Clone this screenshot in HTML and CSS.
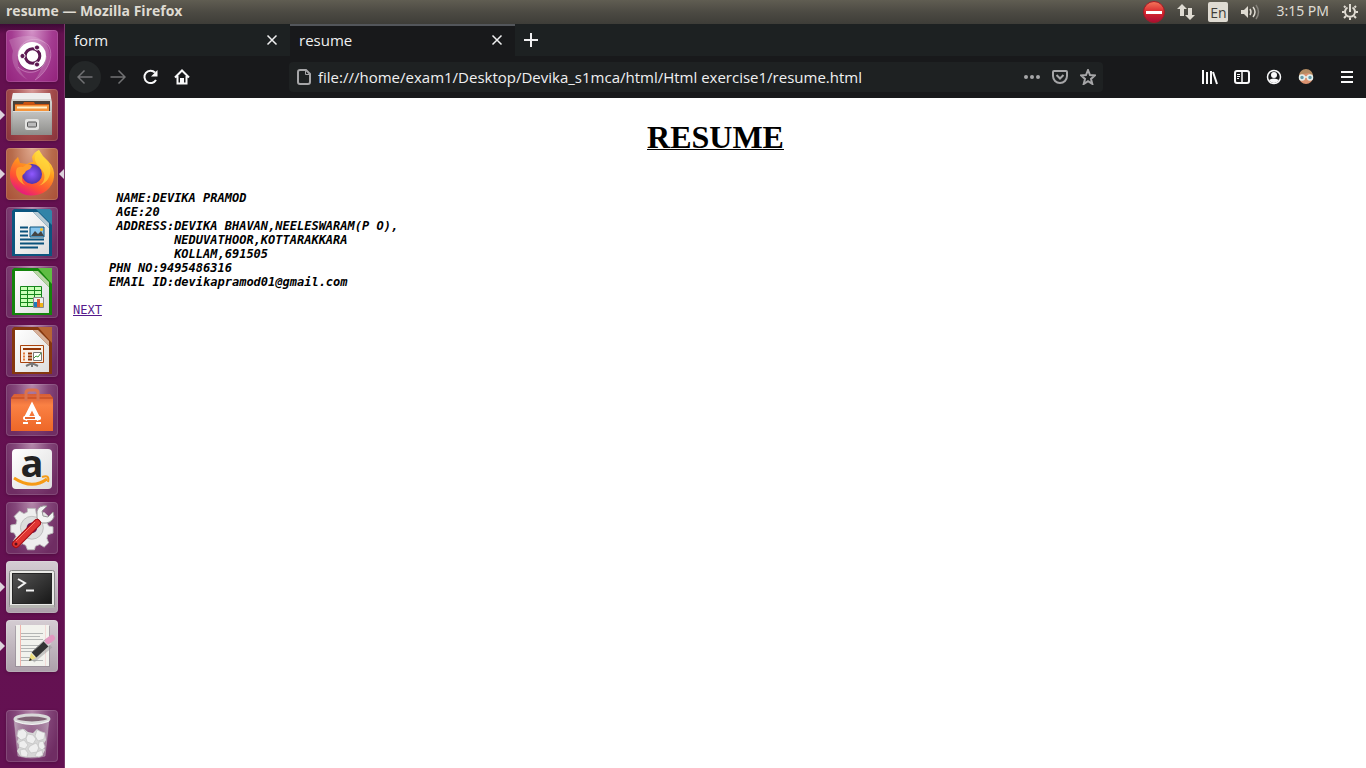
FILE: index.html
```html
<!DOCTYPE html>
<html lang="en">
<head>
<meta charset="utf-8">
<title>resume</title>
<link rel="stylesheet" href="styles.css">
</head>
<body>
<header class="panel">
  <span class="panel-title">resume — Mozilla Firefox</span>
  <div class="indicators">
    <svg width="22" height="22" viewBox="0 0 22 22"><defs><linearGradient id="stop" x2="0" y2="1"><stop offset="0" stop-color="#f4785c"/><stop offset=".5" stop-color="#d8282e"/><stop offset="1" stop-color="#a80c35"/></linearGradient></defs><circle cx="11" cy="11" r="10.5" fill="url(#stop)" stroke="#a31a26"/><path d="M3 10h16v3H3z" fill="#fff"/></svg>
    <svg width="18" height="18" viewBox="0 0 18 18" fill="#dfdbd2"><path d="M5 1l5 5H7v7H3V6H0zM13 17l-5-5h3V5h4v7h3z"/></svg>
    <span class="lang">En</span>
    <svg width="20" height="16" viewBox="0 0 20 16" fill="none" stroke="#dfdbd2" stroke-width="1.5"><path d="M1 6h3l4-4v12l-4-4H1z" fill="#dfdbd2" stroke="none"/><path d="M10 5q2 3 0 6M13 3q4 5 0 10"/><path d="M16 1q5 7 0 14" stroke="#85827b"/></svg>
    <span class="clock">3:15 PM</span>
    <svg width="18" height="18" viewBox="0 0 18 18" fill="none" stroke="#dfdbd2" stroke-width="2"><path d="M6.500 4.500a5 5 0 1 0 5 0M9 1v8"/><path d="M4.500 4.500L3 3M13.500 4.500L15 3M3.500 9H1M14.500 9H17M5 13l-2 2M13 13l2 2M9 14.500V17"/></svg>
  </div>
</header>
<div class="desktop">
  <nav class="launcher" aria-label="Launcher">
    <button class="tile dash" aria-label="Dash"><svg viewBox="0 0 52 52"><g fill="none" stroke="#e4b6dc" stroke-opacity=".45"><path d="M12 26C12 10 30 4 42 15C49 25 42 42 29 50M40 26c0 15-17 22-28 11"/></g><path d="M3 10C18 4 38 3 43 20c4 12-5 24-14 30 9-13 9-21 8-27C32 12 15 13 12 26c-2 11 4 19 10 24C9 43 4 31 7 21z" fill="#fff" opacity=".17"/><circle cx="26" cy="27" r="14" fill="#40103b" opacity=".35"/><circle cx="26" cy="26" r="14" fill="#fff"/><circle cx="26.500" cy="26" r="7.300" fill="none" stroke="#5d1952" stroke-width="3"/><g fill="#5d1952" stroke="#fff"><circle cx="16.500" cy="26" r="2.600"/><circle cx="31" cy="17.500" r="2.600"/><circle cx="31" cy="34.500" r="2.600"/></g></svg></button>
    <button class="tile files running" aria-label="Files"><svg viewBox="0 0 52 52"><defs><linearGradient id="metal" x2="0" y2="1"><stop stop-color="#e2e2e0"/><stop offset="1" stop-color="#8c8c88"/></linearGradient><linearGradient id="drawer" x2="0" y2="1"><stop stop-color="#c4c4c2"/><stop offset="1" stop-color="#8e8e8b"/></linearGradient></defs><path d="M7 4h37l2 9v33H5V13z" fill="url(#metal)"/><path d="M7 4h37l1 6H6z" fill="#eee"/><path d="M7 12h37v10H7z" fill="#4b4038"/><path d="M9 15h8l1-2h10l1 2h14v7H9z" fill="#c95412"/><path d="M9 16h34v6H9z" fill="#f5943a"/><path d="M11 18.500h30" stroke="#fff3cd" stroke-width="2"/><path d="M7 22h38v24H7z" fill="url(#drawer)"/><path d="M7 22.500h38" stroke="#dededc"/><rect x="19" y="30" width="14" height="11" rx="2" fill="#e4e4e2"/><rect x="21.500" y="33" width="9" height="5" rx="1" fill="#bbb" stroke="#555"/></svg></button>
    <button class="tile firefox running active" aria-label="Firefox"><svg viewBox="0 0 52 52"><defs><linearGradient id="fox" x1=".8" y1="0" x2=".3" y2="1"><stop stop-color="#fff44f"/><stop offset=".4" stop-color="#ff9a1d"/><stop offset=".75" stop-color="#ff4e35"/><stop offset="1" stop-color="#e31587"/></linearGradient><radialGradient id="globe"><stop stop-color="#9059ff"/><stop offset="1" stop-color="#5034af"/></radialGradient></defs><path d="M33 2q3 6 9 11q7 7 6 16A22 20 0 0 1 4 26q0-7 5-14l3-3 2 6 7 1q3-2 6-2l-1-5q2-5 7-7z" fill="url(#fox)"/><path d="M33 2c-8 9-3 13 3 20 5 6 2 14-4 16 12-3 16-16 9-25-5-4-7-6-8-11z" fill="#ffd83c" opacity=".7"/><circle cx="26" cy="26" r="10" fill="url(#globe)"/><path d="M11 20q3-2 6-1l4-3q4 0 5 2l-2 3-4 2c-2 4-4 3-4 7q0 6 5 8-8-3-10-9-2-5 0-9z" fill="#ff9d2c"/></svg></button>
    <button class="tile" aria-label="LibreOffice Writer"><svg viewBox="0 0 52 52"><defs><linearGradient id="paper" x2="1" y2="1"><stop stop-color="#fff"/><stop offset="1" stop-color="#dedede"/></linearGradient></defs><path d="M8 2h25l13 13v34H6V4z" fill="#0c557f"/><path d="M30 2h14l2 2v14z" fill="#3184a8"/><path d="M9 5h18l16 16v26H9z" fill="url(#paper)"/><path d="M27 5l16 16V16L32 5z" fill="#b5c9d3"/><path d="M14 20.500h8m-8 4h8m-8 4h8m-8 4h24m-24 4h24m-24 4h18" stroke="#0b527c" stroke-width="2"/><path d="M24 20h14v10H24z" fill="#87c5ed" stroke="#0b527c"/><path d="M25 29l4-5 3 3 3-3 3 5z" fill="#444"/><circle cx="35.500" cy="22.500" r="1.500" fill="#f9bd24"/></svg></button>
    <button class="tile" aria-label="LibreOffice Calc"><svg viewBox="0 0 52 52"><path d="M8 2h25l13 13v34H6V4z" fill="#14830c"/><path d="M32 2h14v16z" fill="#60bd43"/><path d="M9 5h18l16 16v26H9z" fill="url(#paper)"/><path d="M27 5l16 16V16L32 5z" fill="#b9d5a5"/><path d="M15 20.500h20v20H15z" fill="#caffb8"/><path d="M14.500 20.500h21v20h-21zM14.500 24.500h21m-21 4h21m-21 4h21m-21 4h21M21.500 20v20m7-20v20" fill="none" stroke="#16861c"/><path d="M27.500 31.500h10v10h-10z" fill="#eee" stroke="#888"/><path d="M28 36h3v5h-3z" fill="#1c79bd"/><path d="M31 33h3v8h-3z" fill="#dc5a2f"/><path d="M34 37h3v4h-3z" fill="#efb417"/></svg></button>
    <button class="tile" aria-label="LibreOffice Impress"><svg viewBox="0 0 52 52"><path d="M8 2h25l13 13v34H6V4z" fill="#85370f"/><path d="M32 2h14v16z" fill="#b76535"/><path d="M9 5h18l16 16v26H9z" fill="url(#paper)"/><path d="M27 5l16 16V16L32 5z" fill="#d7b19a"/><path d="M14.500 20.500h23v17h-23z" fill="#f9f1e8" stroke="#a9430d"/><path d="M17 24h18M22 28.500h4m-4 3h4m-4 3h4" stroke="#943606" stroke-width="2"/><path d="M17 28.500h2m-2 3h2m-2 3h2" stroke="#e27b3b" stroke-width="2"/><path d="M27.500 27.500h8v8h-8z" fill="#fff" stroke="#777"/><path d="M28 33l2-2 2 1 3-4" fill="none" stroke="#3b9836"/><path d="M20 41l6-3 6 3M26 38v4" fill="none" stroke="#777" stroke-width="2"/></svg></button>
    <button class="tile" aria-label="Ubuntu Software"><svg viewBox="0 0 52 52"><defs><linearGradient id="bag" x2="0" y2="1"><stop stop-color="#d65d35"/><stop offset=".3" stop-color="#fa8144"/><stop offset="1" stop-color="#ed6728"/></linearGradient></defs><path d="M8 10h36l3 4v33H5V14z" fill="url(#bag)"/><path d="M5 14h42" stroke="#b8421c"/><path d="M20 17V9q0-3 3-3h6q3 0 3 3v8" fill="none" stroke="#db724d" stroke-width="3"/><path d="M19 36l7-14 7 14" fill="none" stroke="#fff" stroke-width="4"/><rect x="17" y="32" width="18" height="4" rx="2" fill="#fff"/><path d="M19 34h10" stroke="#e66b32" stroke-width="2"/><path d="M17 39h5m8 0h5" stroke="#fff" stroke-width="2"/></svg></button>
    <button class="tile" aria-label="Amazon"><svg viewBox="0 0 52 52"><rect x="6" y="6" width="40" height="40" rx="4" fill="url(#paper)"/><text class="amazon-letter" x="26" y="34" text-anchor="middle">a</text><path d="M8 35q18 12 33 1" fill="none" stroke="#f69b16" stroke-width="3"/><path d="M36 34q8-3 6 5" fill="none" stroke="#f69b16" stroke-width="2"/></svg></button>
    <button class="tile" aria-label="System Settings"><svg viewBox="0 0 52 52"><g transform="translate(3 2) scale(.88)"><path d="M21 5h9l1 6 4 2 5-3 6 6-3 5 2 4 5 1v7l-6 2-1 4 2 5-5 5-5-3-5 2-1 4h-8l-2-5-4-2-5 3-5-6 3-5-2-4-4-1v-8l6-1 1-4-3-5 6-6 5 3 4-2z" fill="#eee" stroke="#bbb"/><circle cx="26" cy="27" r="13" fill="#ddd" stroke="#bbb"/><circle cx="26" cy="27" r="6" fill="#6c1a59"/></g><path d="M32 20L40 12" stroke="#e4e4e4" stroke-width="6"/><path d="M31 16l5 5q9 1 12-6l-1-5-5 5-5-1-1-5 5-5q-8-1-10 5z" fill="#f3f3f3" stroke="#999"/><path d="M10 42L31 21" stroke="#a50c14" stroke-width="8" stroke-linecap="round"/><path d="M10 42L31 21" stroke="#df3431" stroke-width="6" stroke-linecap="round"/><path d="M10 39L29 20" stroke="#fb7d6f"/><circle cx="10" cy="42" r="1.500" fill="#5a1120"/></svg></button>
    <button class="tile silver running" aria-label="Terminal"><svg viewBox="0 0 52 52"><defs><linearGradient id="screen" x2="1" y2="1"><stop stop-color="#555"/><stop offset="1" stop-color="#171717"/></linearGradient></defs><rect x="3.500" y="9.500" width="45" height="37" rx="2" fill="#e9e9e6" stroke="#888"/><path d="M4 44h44v3H4z" fill="#b4b4b0"/><rect x="6.500" y="12.500" width="39" height="30" fill="url(#screen)" stroke="#252525"/><path d="M12 18l7 4-7 5M20 29.500h8" fill="none" stroke="#f2f2f2" stroke-width="2"/></svg></button>
    <button class="tile silver running" aria-label="Text Editor"><svg viewBox="0 0 52 52"><path d="M9 6h35v41H9z" fill="#77717a" opacity=".4"/><path d="M10 5h33v41H10z" fill="#f2f2ed"/><path d="M14.500 5v41" stroke="#f0b5ad"/><path d="M39.500 5v41" stroke="#f3dbd8"/><path d="M15 13.500h22m-22 3h19m-19 3h22m-22 6h18m-18 3h19m-19 3h19m-19 6h14m-14 3h22" stroke="#b4b6b5"/><path d="M27 41l18-15" stroke="#999" stroke-opacity=".5" stroke-width="4"/><path d="M28 35l13-12" stroke="#333" stroke-width="7"/><path d="M26 32l14-13" stroke="#888"/><path d="M40 24l3-3" stroke="#d0d0d0" stroke-width="7"/><path d="M42 21l4-3" stroke="#e398c0" stroke-width="6" stroke-linecap="round"/><path d="M23 41l2-8 5 5z" fill="#edde7c"/><path d="M23 41l1-3 2 2z" fill="#222"/></svg></button>
    <button class="tile trash" aria-label="Trash"><svg viewBox="0 0 52 52"><defs><linearGradient id="bin"><stop stop-color="#eee" stop-opacity=".6"/><stop offset=".5" stop-color="#999" stop-opacity=".1"/><stop offset="1" stop-color="#eee" stop-opacity=".5"/></linearGradient></defs><path d="M8 9h35l-4 37q-13 4-27 0z" fill="url(#bin)" stroke="#b6a1b3" stroke-opacity=".6"/><path d="M12 20l6-1 4 3 5 1 4-4 4 3 4 1 1 7-3 5 2 5-3 6q-12 3-22 0l-3-5 3-5-3-4 2-5z" fill="#d6d6d6"/><g fill="#eee" stroke="#c1c1c1" stroke-width=".7"><path d="M12 21l5-2 4 4-1 5-5 2-4-4zM22 24l5 1 3 4-3 5-6-2-1-4zM31 20l5 2 3 1-1 6-6 2-3-5zM13 32l5-2 4 5-3 4-6-2zM24 36l6-3 3 4-2 5-6 1-3-4zM33 32l4-1 2 6-3 3-4-3zM14 40l5-1 3 4-1 4-6-1zM31 42l5-2 1 5-4 2-4-1z"/></g><ellipse cx="26" cy="9" rx="17" ry="4" fill="#806375" stroke="#d9d9d9" stroke-width="3"/><path d="M9 11q17 7 34 0" fill="none" stroke="#f5f5f5"/></svg></button>
  </nav>
  <div class="browser">
    <div class="tabs">
      <div class="tab"><span>form</span><button class="close" aria-label="Close form"><svg width="12" height="12" viewBox="0 0 12 12"><path d="M1.500 1.500l9 9m0-9l-9 9"/></svg></button></div>
      <div class="tab selected"><span>resume</span><button class="close" aria-label="Close resume"><svg width="12" height="12" viewBox="0 0 12 12"><path d="M1.500 1.500l9 9m0-9l-9 9"/></svg></button></div>
      <button class="new-tab" aria-label="New tab"><svg width="16" height="16" viewBox="0 0 16 16"><path d="M8 1v14M1 8h14"/></svg></button>
    </div>
    <div class="toolbar">
      <div class="nav-buttons">
        <button class="tool back" aria-label="Back"><svg viewBox="0 0 16 16"><path d="M15.500 8H1M7.500 1.500L1 8l6.500 6.500"/></svg></button>
        <button class="tool dim" aria-label="Forward"><svg viewBox="0 0 16 16"><path d="M.5 8H15M8.500 1.500L15 8l-6.500 6.500"/></svg></button>
        <button class="tool" aria-label="Reload"><svg viewBox="0 0 16 16"><path d="M14 11a6.200 6.200 0 1 1-1-7.500" stroke-width="2"/><path d="M15.500 1v6.500H9z" fill="#f9f9fa" stroke="none"/></svg></button>
        <button class="tool" aria-label="Home"><svg viewBox="0 0 16 16"><path d="M1 8.500l7-7 7 7M3.500 7v7.500h9V7" stroke-width="2"/><path d="M7 14V10h2v4" stroke-width="2"/></svg></button>
      </div>
      <div class="address">
        <svg width="14" height="16" viewBox="0 0 14 16"><path d="M3 1h6l4 4v8q0 2-2 2H3q-2 0-2-2V3q0-2 2-2z"/><path d="M8.500 1v4.500H13" stroke-width="1"/></svg>
        <input type="text" aria-label="Address" value="file:///home/exam1/Desktop/Devika_s1mca/html/Html exercise1/resume.html">
        <button aria-label="Page actions"><svg width="16" height="16" viewBox="0 0 16 16"><g fill="#a6a6a8" stroke="none"><circle cx="2" cy="8" r="2"/><circle cx="8" cy="8" r="2"/><circle cx="14" cy="8" r="2"/></g></svg></button>
        <button aria-label="Save to Pocket"><svg width="16" height="16" viewBox="0 0 16 16"><path d="M2 2h12q1 0 1 1v4a7 7 0 0 1-14 0V3q0-1 1-1zM4.500 6L8 9.500 11.500 6"/></svg></button>
        <button aria-label="Bookmark"><svg width="16" height="16" viewBox="0 0 16 16"><path d="M8 1l2 5 5 .4-4 3.500 1.300 5L8 12.200 3.700 15 5 9.900 1 6.400 6 6z"/></svg></button>
      </div>
      <div class="actions">
        <button class="tool" aria-label="Library"><svg viewBox="0 0 16 16"><path d="M1 1v14M5 3v12M9 2v13M11 3l4 12" stroke-width="2"/></svg></button>
        <button class="tool" aria-label="Sidebars"><svg viewBox="0 0 16 16"><rect x="1" y="2" width="14" height="12" rx="2" stroke-width="2"/><path d="M8 2v12"/><path d="M3 5.500h3m-3 2h3m-3 2h2" stroke-width="1"/></svg></button>
        <button class="tool" aria-label="Account"><svg viewBox="0 0 16 16"><circle cx="8" cy="8" r="6.500"/><circle cx="8" cy="6" r="3" fill="#f9f9fa" stroke="none"/><path d="M3 11q5-3 10 0-2 3-5 3t-5-3z" fill="#f9f9fa" stroke="none"/></svg></button>
        <button class="tool" aria-label="Avatar"><svg viewBox="0 0 16 16"><circle cx="8" cy="8" r="7" fill="#db9270" stroke="none"/><path d="M1 7a7 7 0 0 1 14 0L11 4 5 5z" fill="#b38b62" stroke="none"/><g fill="#679caa" stroke="#e6f1ee" stroke-width="1.500"><circle cx="4" cy="8.500" r="2.500"/><circle cx="12" cy="8.500" r="2.500"/></g><path d="M6.500 8h3" stroke="#e6f1ee"/></svg></button>
        <button class="tool menu" aria-label="Menu"><svg viewBox="0 0 16 16"><path d="M2 3h12M2 8h12M2 13h12" stroke-width="2"/></svg></button>
      </div>
    </div>
    <main class="page">
      <h1>RESUME</h1>
      <pre class="details">      NAME:DEVIKA PRAMOD
      AGE:20
      ADDRESS:DEVIKA BHAVAN,NEELESWARAM(P O),
              NEDUVATHOOR,KOTTARAKKARA
              KOLLAM,691505
     PHN NO:9495486316
     EMAIL ID:devikapramod01@gmail.com</pre>
      <a class="next" href="#">NEXT</a>
    </main>
  </div>
</div>
</body>
</html>
```

FILE: styles.css
```css
* { box-sizing: border-box; }

body {
  margin: 0;
  min-height: 100vh;
  display: flex;
  flex-direction: column;
  background: #fff;
  font-family: "Open Sans", sans-serif;
  font-size: 15px;
}

button {
  padding: 0;
  border: 0;
  background: none;
  color: inherit;
}

svg { display: block; flex: none; }

.panel {
  height: 24px;
  padding: 0 7px 0 6px;
  display: flex;
  align-items: center;
  justify-content: space-between;
  background: linear-gradient(#605d52, #4c4a43 50%, #3e3d38);
  color: #dfdbd2;
}

.panel-title { font-size: 14px; font-weight: 700; line-height: 22px; margin-bottom: 2px; }

.indicators { display: flex; align-items: center; gap: 12px; }

.lang {
  width: 20px;
  height: 20px;
  margin-left: 1px;
  border-radius: 2px;
  background: #dfdbd2;
  color: #3e3d38;
  font-size: 14px;
  line-height: 22px;
  text-align: center;
}

.clock { margin-left: 4px; font: 14px/22px "Noto Sans", sans-serif; margin-bottom: 2px; }

.desktop { flex: 1; display: flex; }

.launcher {
  width: 65px;
  padding: 6px 7px 6px 6px;
  display: flex;
  flex-direction: column;
  gap: 7px;
  border-right: 1px solid #7c386c;
  background: linear-gradient(#3e0936, #64104f 10px, #641152);
}

.tile {
  position: relative;
  width: 52px;
  height: 52px;
  border-radius: 4px;
  background: radial-gradient(ellipse at 50% 0, #b488aa, #84477a 45%, #6f2d63 80%);
  box-shadow: inset 0 0 0 1px #ffffff22, 0 1px 3px #3b093077;
}

.tile svg { width: 52px; height: 52px; overflow: visible; }
.dash { background: radial-gradient(ellipse at 50% 0, #d493c8, #a43c91 55%, #92217b); }
.files { background: radial-gradient(ellipse at 50% 0, #d79b99, #a34c4b 55%, #87323b); }
.firefox { background: radial-gradient(ellipse at 50% 0, #dfa88d, #b76b4b 55%, #a84f37); }
.silver { background: linear-gradient(#d5cdd3, #aca0aa); }
.trash { margin-top: auto; }

.running::before,
.active::after {
  content: "";
  position: absolute;
  top: 21px;
  border: 5px solid transparent;
}

.running::before { left: -6px; border-left-color: #ddd3dc; border-right: 0; }
.active::after { right: -6px; border-right-color: #ddd3dc; border-left: 0; }

.amazon-letter { font: 700 38px "Open Sans", sans-serif; fill: #222; }

.browser { flex: 1; min-width: 0; display: flex; flex-direction: column; }

.tabs {
  height: 32px;
  display: flex;
  background: #1d2122;
  color: #f0f0f1;
}

.tab {
  width: 225px;
  padding: 0 12px 0 9px;
  display: flex;
  align-items: center;
  justify-content: space-between;
}

.tab.selected { border-top: 2px solid #53565b; padding-bottom: 2px; background: #18191b; }

.close svg,
.new-tab svg { fill: none; stroke: #f0f0f1; stroke-width: 2; }
.close svg { stroke-width: 1.5; }
.new-tab { width: 32px; display: grid; place-items: center; }

.toolbar {
  height: 42px;
  padding: 0 3px 0 4px;
  display: flex;
  align-items: center;
  background: #18191b;
}

.nav-buttons { flex: 1 1 220px; display: flex; align-items: center; }

.tool {
  width: 32px;
  height: 32px;
  display: grid;
  place-items: center;
}

.tool svg {
  width: 16px;
  height: 16px;
  fill: none;
  stroke: #f9f9fa;
  stroke-width: 1.5;
}

.back { border-radius: 50%; background: #242728; margin-right: 1px; }
.back svg,
.dim svg { stroke: #717274; }

.address {
  flex: 0 1 814px;
  height: 30px;
  padding: 0 7px 0 8px;
  display: flex;
  align-items: center;
  gap: 12px;
  border-radius: 4px;
  background: #1e2122;
}

.address svg { fill: none; stroke: #a6a6a8; stroke-width: 2; }

.address input {
  flex: 1;
  min-width: 0;
  margin-left: -5px;
  padding: 0;
  border: 0;
  outline: 0;
  background: none;
  color: #f0f0f1;
  font: 15px "Open Sans", sans-serif;
}

.actions { flex: 1 1 260px; display: flex; justify-content: flex-end; }
.menu { margin-left: 9px; }

.page { flex: 1; padding: 21px 8px 8px; background: #fff; }

.page h1 {
  margin: 0 0 35px;
  font: 700 32px/37px "Liberation Serif", serif;
  color: #000;
  text-align: center;
  text-decoration: underline 1px;
}

.details,
.next { font-family: "DejaVu Sans Mono", monospace; font-size: 12px; line-height: 14px; }

.details {
  margin: 0 0 14px;
  font-weight: 700;
  font-style: italic;
  color: #000;
}

.next { display: block; width: max-content; color: #551a8b; }
```
